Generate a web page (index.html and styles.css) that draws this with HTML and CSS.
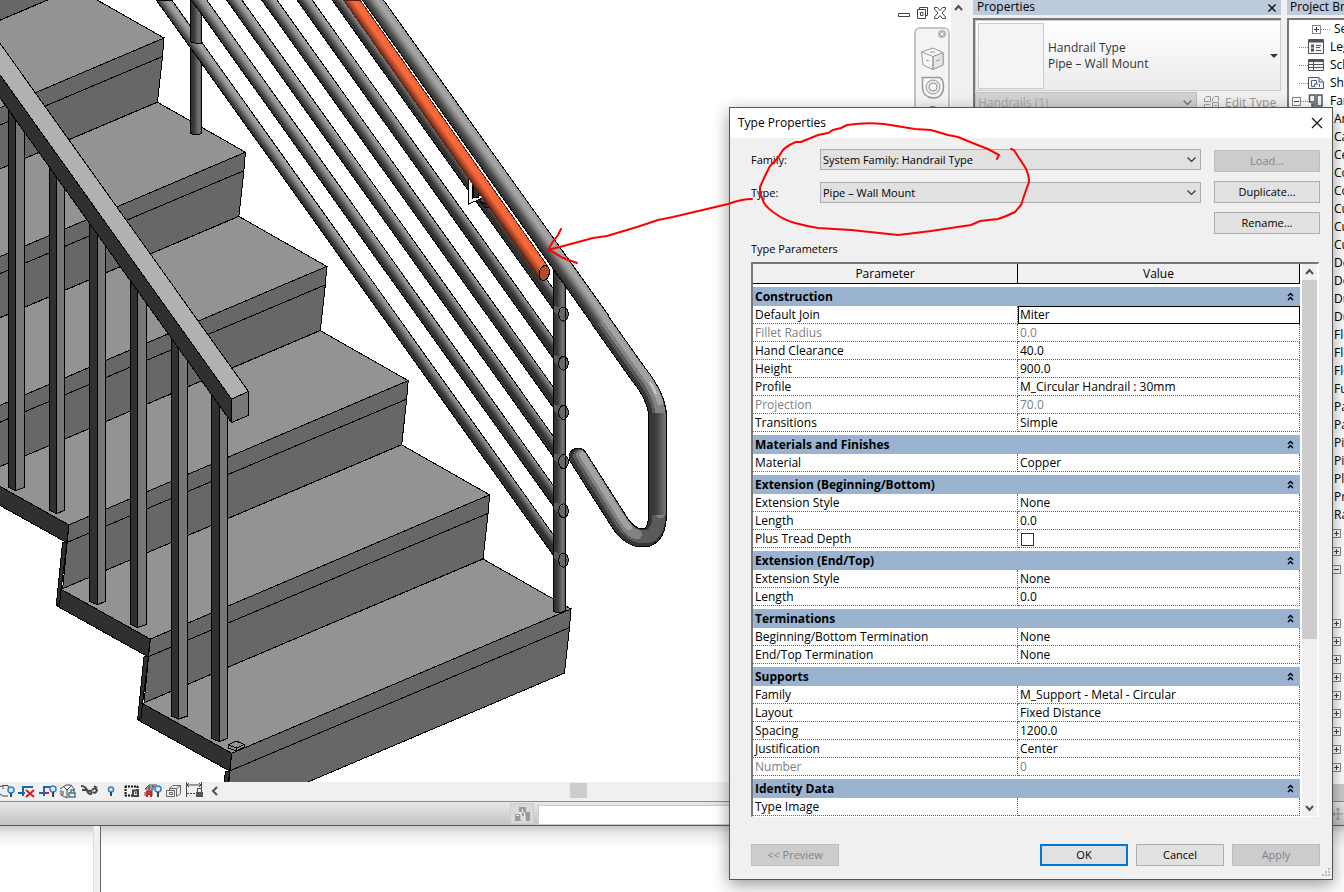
FILE: index.html
```html
<!DOCTYPE html>
<html lang="en">
<head>
  <meta charset="UTF-8">
  <title>Type Properties</title>
  <link rel="stylesheet" href="styles.css">
</head>
<body>

  <div class="app">
    <div class="workspace">

      <!-- 3D view -->
      <main class="view">
        <div class="canvas">
          <svg class="drawing" role="img" aria-label="Stair and railing">
            <defs>
              <linearGradient id="pipeShade" gradientUnits="userSpaceOnUse" x1="158.9" y1="3.7" x2="169.1" y2="-3.7">
                <stop offset="0" stop-color="#303030"/><stop offset=".2" stop-color="#505050"/>
                <stop offset=".5" stop-color="#8c8c8c"/><stop offset=".75" stop-color="#a6a6a6"/><stop offset="1" stop-color="#8a8a8a"/>
              </linearGradient>
              <linearGradient id="railShade" gradientUnits="userSpaceOnUse" x1="366.3" y1="4.8" x2="379.7" y2="-4.8">
                <stop offset="0" stop-color="#333"/><stop offset=".2" stop-color="#4a4a4a"/>
                <stop offset=".5" stop-color="#8c8c8c"/><stop offset=".7" stop-color="#a8a8a8"/><stop offset="1" stop-color="#999"/>
              </linearGradient>
              <linearGradient id="copperShade" gradientUnits="userSpaceOnUse" x1="346.5" y1="3.7" x2="357" y2="-3.7">
                <stop offset="0" stop-color="#6e2c18"/><stop offset=".25" stop-color="#b54b2c"/>
                <stop offset=".55" stop-color="#fb6a3c"/><stop offset="1" stop-color="#f06338"/>
              </linearGradient>
              <linearGradient id="postShade">
                <stop offset="0" stop-color="#303030"/><stop offset=".3" stop-color="#383838"/>
                <stop offset=".75" stop-color="#747474"/><stop offset="1" stop-color="#5c5c5c"/>
              </linearGradient>
              <linearGradient id="dropShade">
                <stop offset="0" stop-color="#333"/><stop offset=".4" stop-color="#3c3c3c"/><stop offset="1" stop-color="#787878"/>
              </linearGradient>
              <g id="step">
                <path class="front" d="M571 609L569.500 627.500L564.500 673L225.500 817L231.700 753Z"/>
                <path class="edge" d="M569.500 627.500L229.500 771"/>
                <path class="side" d="M225.400 771H229.800L224 817L222.500 832L219 834Z"/>
                <path class="tread" d="M483 559L571 609L231.700 753.300L142.500 703.500Z"/>
                <path class="side" d="M142.500 703.500L231.700 753.300L229.500 771L138 720L141 718Z"/>
              </g>
              <path id="pipe" class="pipe" d="M156.200 0H171.700L553.500 535V555.500Z"/>
              <g id="elbow">
                <path class="knuckle" d="M554 552L560 553Q567 552 567 559L563 567L554 558Z"/>
                <ellipse class="cap" cx="563.500" cy="560" rx="4.800" ry="7"/>
                <path class="edge" d="M565.500 553V566"/>
              </g>
            </defs>

            <use href="#step" x="-488.400" y="-685.200"/>
            <use href="#step" x="-407" y="-571"/>
            <use href="#step" x="-325.600" y="-456.800"/>
            <use href="#step" x="-244.200" y="-342.600"/>
            <use href="#step" x="-162.800" y="-228.400"/>
            <use href="#step" x="-81.400" y="-114.200"/>
            <use href="#step"/>

            <g class="balusters">
              <path class="dark" d="M8.500 97H15.500V490.500L8.500 487.500Z"/><path class="light" d="M15.500 97H24.500V487.500L15.500 490.500Z"/>
              <path class="dark" d="M49.500 154H56.500V513.500L49.500 510.500Z"/><path class="light" d="M56.500 154H64.500V510.500L56.500 513.500Z"/>
              <path class="dark" d="M89.500 210H97.500V604.500L89.500 601.500Z"/><path class="light" d="M97.500 210H105.500V601.500L97.500 604.500Z"/>
              <path class="dark" d="M130.500 268H137.500V627.500L130.500 624.500Z"/><path class="light" d="M137.500 268H146.500V624.500L137.500 627.500Z"/>
              <path class="dark" d="M171.500 325H178.500V719L171.500 716Z"/><path class="light" d="M178.500 325H187.500V716L178.500 719Z"/>
              <path class="dark" d="M211.500 381H219.500V741.500L211.500 738.500Z"/><path class="light" d="M219.500 381H227.500V738.500L219.500 741.500Z"/>
            </g>
            <path class="dark" d="M-2 72L231.500 399V422.500L-2 95Z"/>
            <path class="railtop" d="M-2 40.500L248.500 391.500L231.500 399L-2 72Z"/>
            <path class="light" d="M231.500 399L248.500 391.500V415.500L231.500 422.500Z"/>
            <path class="tread" d="M228.500 745L236 741L244.500 744.500V747L236.500 751L228.500 748Z"/>
            <path class="edge" d="M228.500 745L236.500 748L244.500 744.500M236.500 748V751"/>

            <path class="post" d="M190.500 44H201.500V133Q196 137 190.500 133Z"/>
            <use href="#pipe"/>
            <path class="post" d="M190.500 -2H201.500V43L199 44L191 42Z"/>
            <use href="#pipe" y="-49.200"/>
            <use href="#pipe" y="-98.400"/>
            <use href="#pipe" y="-147.600"/>
            <use href="#pipe" y="-196.800"/>
            <use href="#pipe" y="-246"/>

            <path class="post" d="M553.500 262H565.500V610Q559 615 553.500 611Z"/>
            <use href="#elbow"/>
            <use href="#elbow" y="-49.200"/>
            <use href="#elbow" y="-98.400"/>
            <use href="#elbow" y="-147.600"/>
            <use href="#elbow" y="-196.800"/>
            <use href="#elbow" y="-246"/>

            <!-- handrail with its return bend -->
            <g class="bend">
              <path class="b0" d="M600 320L638 373.500Q657.500 398 657.500 416V513Q657.500 538 643 538Q630 538 620 523L578 457"/>
              <path class="b1" d="M600 320L638 373.500Q657.500 398 657.500 416V513Q657.500 538 643 538Q630 538 620 523L578 457"/>
              <path class="b2" d="M601.500 319L639.500 372.500Q659 397 659 416V513Q659 537 644 537Q632 537 621 522L579.500 456"/>
              <path class="b3" d="M603 318L641 371.500Q660 395 660.500 416V513M637 534.500Q630 533 622.500 521L581 455"/>
              <path class="b4" d="M604 317L642 370.500Q656 388 660 402M629 527Q626 525 623.500 520.500L582 454.500"/>
            </g>
            <path class="drop" d="M649 413H666V515H649Z"/>
            <path class="handrail" d="M360 -3.500H381L609 316L594 326.500Z"/>
            <path class="edge" d="M362.500 0L594 326.500M383.500 0L609 316"/>
            <path class="glint" d="M650 382Q654 388 656 394"/>

            <!-- wall bracket -->
            <path class="bracket-line" d="M470.500 178V201L485 195"/>
            <path class="bracket" d="M470.500 178V201L485 195"/>
            <path class="dark" d="M473.500 183V197H478.500V188Z"/>
            <path class="dark" d="M479 201L488 205L492 208L485 207Z"/>

            <path class="copper" d="M343.500 0H360L547.500 266L539.500 279Z"/>
            <ellipse class="copper-end" cx="544.300" cy="273" rx="5" ry="7.500" transform="rotate(12 544.300 273)"/>
          </svg>

          <div class="window-tools">
            <button aria-label="Minimize view"><svg width="14" height="14"><path class="ico" d="M1.500 7.500H12.500V10.500H1.500Z"/></svg></button>
            <button aria-label="Restore view"><svg width="14" height="14"><path class="ico" d="M4.500 3.500V1.500H12.500V9.500H10.500M2.500 3.500H10.500V12.500H2.500ZM5.500 6.500H8V9.500H5.500Z"/></svg></button>
            <button aria-label="Close view"><svg width="14" height="14"><path class="ico" d="M1.500 1.500H4.500L7 4.500L9.500 1.500H12.500V3L9 7L12.500 11V12.500H9.500L7 9.500L4.500 12.500H1.500V11L5 7L1.500 3Z"/></svg></button>
          </div>
          <div class="navbar">
            <svg width="32" height="90" viewBox="1 1 32 90">
              <circle cx="27" cy="6" r="4" fill="#b4b4b4"/><path d="M25.500 4.500L28.500 7.500M28.500 4.500L25.500 7.500" stroke="#fff"/>
              <g fill="#f7f7f7" stroke="#999"><path d="M6.500 24L18 20L28 24.500V37L18 41.500L8 37Z"/><path fill="#e6e6e6" d="M18 28.500L28 24.500V37L18 41.500Z"/><path d="M6.500 24L18 28.500L28 24.500M18 28.500V41.500M11 32L14 33M21 33L25 31.500M15 24H20"/>
              <path d="M7.500 49.500H24Q28.500 50 28.500 59Q28 70 18 70Q8 69 7.500 60Z" stroke-width="1.500"/><circle cx="18" cy="59" r="7" fill="#e6e6e6"/><circle cx="18" cy="59" r="4"/></g>
              <path d="M15 79H20" stroke="#888" stroke-width="2"/>
            </svg>
          </div>
        </div>

        <div class="viewbar">
          <button aria-label="Sun path"><svg width="16" height="18" viewBox="5 0 16 18"><path class="k" d="M4 5L8 3.500H13L14 8M5 12L8 14H13M8 4V7"/><circle class="b" cx="16" cy="8" r="3"/><path class="k2" d="M16 11V15"/></svg></button>
          <button aria-label="Crop view"><svg width="21" height="18"><path class="bb" d="M7 14V5H17M2 11H9"/><path class="r" d="M10 8L18 15M18 8L10 15"/></svg></button>
          <button aria-label="Show crop region"><svg width="21" height="18"><path class="bb" d="M7 14V5H13M2 11H9"/><path class="r" d="M9 11H12"/><circle class="b" cx="16" cy="7" r="3"/><path class="k2" d="M16 10V15"/></svg></button>
          <button aria-label="Lock 3D view"><svg width="21" height="18"><path class="k" d="M2 7L8 3L13 3L17 8M3 8V13L9 16V8L6 5M9 8L13 4M5 9V13"/><path class="t" d="M11 11H17V15H11ZM13 11V8H16V11"/></svg></button>
          <button aria-label="Temporary hide"><svg width="21" height="18"><path class="k2" d="M2 4Q6 4 8 8L3 8M8 9Q9 12 12 12Q14 8 9 9M14 10Q17 12 18 8Q16 5 13 8M15 4L18 6"/></svg></button>
          <button aria-label="Reveal hidden elements"><svg width="21" height="18"><circle class="b" cx="11" cy="7.500" r="2.500"/><path class="k2" d="M11 10V14"/></svg></button>
          <button aria-label="Temporary view properties"><svg width="21" height="18"><path class="d" d="M4 4.500H17M4 13.500H11M4.500 4V14M16.500 4V8"/><path class="k2" d="M12 8.500H17V14H12ZM14 11H15.500"/></svg></button>
          <button aria-label="Analytical model"><svg width="21" height="18"><path class="k" d="M3 7L7 3H15M3 7H10V14M7 3V12M11 3V8M3 10V14M5 5H13"/><path class="r" d="M5 15V9.500H9V15M5 12H9"/><circle class="b" cx="16" cy="7" r="3"/><path class="k2" d="M16 10V15"/></svg></button>
          <button aria-label="Displacement sets"><svg width="21" height="18"><path class="g" d="M6.500 6.500L9.500 3.500H17.500V11.500L13.500 14.500M3.500 8.500H11.500V14.500H3.500ZM6.500 8.500V6.500H13.500V14.500M13.500 6.500L17.500 3.500M6.500 10.500H9.500V12.500H6.500Z"/></svg></button>
          <button aria-label="Reveal constraints"><svg width="21" height="18"><path class="k" d="M2.500 0V15M17.500 0V6M3 3H17M5 1L3 3L5 5M15 1L17 3L15 5"/><path class="k" stroke-dasharray="2 1" d="M3 11.500H11"/><path class="lock" d="M12 10H19V15H12Z"/><path class="k" d="M13.500 10V6.500H17.500V10"/></svg></button>
          <button aria-label="Scroll left"><svg width="20" height="18"><path class="arrow" d="M12 5L8 9L12 13"/></svg></button>
          <div class="hscroll"><span class="hthumb"></span></div>
        </div>
      </main>

      <div class="vscroll"><svg width="15" height="16"><path class="arrow" d="M4 10L7.500 6L11 10"/></svg></div>

      <aside class="properties">
        <header class="panel-head"><span>Properties</span><button aria-label="Close properties"><svg width="10" height="10"><path d="M1.500 1.500L8.500 8.500M8.500 1.500L1.500 8.500" stroke="#111" stroke-width="1.500"/></svg></button></header>
        <div class="panel-body">
          <button class="type-picker">
            <span class="thumb"></span>
            <span class="type-name">Handrail Type<br>Pipe – Wall Mount</span>
            <svg width="10" height="6"><path d="M1 1H9L5 5Z" fill="#333"/></svg>
          </button>
          <div class="filter">
            <select aria-label="Selection filter" disabled><option>Handrails (1)</option></select>
            <button class="edit-type" disabled>
              <svg width="18" height="16"><path d="M1.500 7V3.500L3.500 1.500H7.500V6.500H1.500M9.500 6V3.500L11.500 1.500H15.500V6M1.500 9V14.500H7M3 9.500H7M9.500 7.500H15.500V15.500H9.500ZM11.500 10.500H14M11.500 13.500H14" fill="none" stroke="#999"/></svg>
              Edit Type
            </button>
          </div>
        </div>
      </aside>

      <aside class="browser">
        <header class="panel-head"><span>Project Browser</span></header>
        <ul class="tree">
          <li class="l1"><i class="box plus"></i><i class="dots"></i>Sections</li>
          <li class="l2"><i class="dots"></i><svg width="16" height="16"><path d="M.500 .500H15.500V14.500H.500ZM1 3H15" fill="#f5f5f5" stroke="#4b5460"/><path d="M1 2H15" stroke="#4b5460" stroke-width="2"/><path d="M3 7H6M3 11H6" stroke="#4b5460" stroke-width="3"/><path d="M8 6.500H13M8 8.500H12M8 11.500H13" stroke="#4b5460"/></svg>Legends</li>
          <li class="l2"><i class="dots"></i><svg width="16" height="16"><path d="M.500 2.500H15.500V13.500H.500ZM1 7.500H15M1 10.500H15M5.500 3V13" fill="#f5f5f5" stroke="#4b5460"/><path d="M1 3.500H15" stroke="#4b5460" stroke-width="3"/></svg>Schedules</li>
          <li class="l2"><i class="dots"></i><svg width="16" height="16"><path d="M.500 2.500H11L15.500 7V13.500H.500ZM11 3V7H15" fill="#f5f5f5" stroke="#4b5460"/><path d="M3.500 11.500V5.500H8.500V9M3.500 11.500H6.500V9H10M11.500 9V12" fill="none" stroke="#496582"/></svg>Sheets</li>
          <li class="l2"><i class="box minus"></i><i class="dots"></i><svg width="16" height="16"><path d="M1.500 2H7V9H1.500ZM9 2H14V13H4V11H9Z" fill="#f5f5f5" stroke="#4b5460" stroke-width="1.500"/></svg>Families</li>
          <li class="l3">Annotation Symbols</li>
          <li class="l3">Cable Trays</li>
          <li class="l3">Ceilings</li>
          <li class="l3">Columns</li>
          <li class="l3">Conduits</li>
          <li class="l3">Curtain Panels</li>
          <li class="l3">Curtain Systems</li>
          <li class="l3">Curtain Wall Mullions</li>
          <li class="l3">Detail Items</li>
          <li class="l3">Doors</li>
          <li class="l3">Duct Systems</li>
          <li class="l3">Ducts</li>
          <li class="l3">Flex Ducts</li>
          <li class="l3">Flex Pipes</li>
          <li class="l3">Floors</li>
          <li class="l3">Furniture</li>
          <li class="l3">Parking</li>
          <li class="l3">Pattern</li>
          <li class="l3">Pipes</li>
          <li class="l3">Piping Systems</li>
          <li class="l3">Planting</li>
          <li class="l3">Profiles</li>
          <li class="l3">Railings</li>
          <li class="l4"><i class="box plus"></i></li>
          <li class="l4"><i class="box plus"></i></li>
          <li class="l4"><i class="box minus"></i></li>
          <li class="l4"></li>
          <li class="l4"></li>
          <li class="l4"><i class="box plus"></i></li>
          <li class="l4"><i class="box plus"></i></li>
          <li class="l4"><i class="box plus"></i></li>
          <li class="l4"><i class="box plus"></i></li>
          <li class="l4"><i class="box plus"></i></li>
          <li class="l4"><i class="box plus"></i></li>
          <li class="l4"><i class="box plus"></i></li>
          <li class="l4"><i class="box plus"></i></li>
          <li class="l4"><i class="box plus"></i></li>
        </ul>
        <div class="tree-scroll"></div>
      </aside>
    </div>

    <footer class="statusbar">
      <button class="worksets" aria-label="Worksets"><svg width="18" height="18"><path d="M5 2H12V7H5ZM1 9H7V16H1ZM11 7H16V16H12ZM8 8H10V11H8Z" fill="#9b9b9b"/><path d="M4 8L7 9V15M8.500 4V7M10.500 9V15M2 10.500H5" fill="none" stroke="#f3f3f3"/></svg></button>
      <div class="status-field"></div>
      <svg width="12" height="14"><path d="M6 1V13M1 7H11M4 3L6 1L8 3M4 11L6 13L8 11M3 5L1 7L3 9" fill="none" stroke="#8f8f8f"/></svg>
    </footer>
  </div>

  <div class="lower"><div class="lower-side"></div></div>

  <!-- Type Properties window -->
  <form class="dialog" onsubmit="return false">
    <header class="titlebar">
      <span>Type Properties</span>
      <button type="button" aria-label="Close"><svg width="12" height="12"><path d="M1 1L11 11M11 1L1 11" stroke="#111" stroke-width="1.200"/></svg></button>
    </header>

    <div class="dialog-body">
      <div class="top">
        <div class="fields">
          <label for="family">Family:</label>
          <select id="family"><option>System Family: Handrail Type</option></select>
          <label for="type">Type:</label>
          <select id="type"><option>Pipe – Wall Mount</option></select>
        </div>
        <div class="side-buttons">
          <button type="button" disabled>Load...</button>
          <button type="button">Duplicate...</button>
          <button type="button">Rename...</button>
        </div>
      </div>

      <p class="caption">Type Parameters</p>

      <div class="params">
        <table>
          <thead>
            <tr><th>Parameter</th><th>Value</th></tr>
          </thead>
          <tbody>
            <tr class="group"><th colspan="2"><span>Construction<svg width="7" height="9"><path d="M1 4L3.500 1.500L6 4M1 8L3.500 5.500L6 8"/></svg></span></th></tr>
            <tr><td>Default Join</td><td class="active">Miter</td></tr>
            <tr class="off"><td>Fillet Radius</td><td>0.0</td></tr>
            <tr><td>Hand Clearance</td><td>40.0</td></tr>
            <tr><td>Height</td><td>900.0</td></tr>
            <tr><td>Profile</td><td>M_Circular Handrail : 30mm</td></tr>
            <tr class="off"><td>Projection</td><td>70.0</td></tr>
            <tr><td>Transitions</td><td>Simple</td></tr>
            <tr class="group"><th colspan="2"><span>Materials and Finishes<svg width="7" height="9"><path d="M1 4L3.500 1.500L6 4M1 8L3.500 5.500L6 8"/></svg></span></th></tr>
            <tr><td>Material</td><td>Copper</td></tr>
            <tr class="group"><th colspan="2"><span>Extension (Beginning/Bottom)<svg width="7" height="9"><path d="M1 4L3.500 1.500L6 4M1 8L3.500 5.500L6 8"/></svg></span></th></tr>
            <tr><td>Extension Style</td><td>None</td></tr>
            <tr><td>Length</td><td>0.0</td></tr>
            <tr><td><label for="tread">Plus Tread Depth</label></td><td><input type="checkbox" id="tread"></td></tr>
            <tr class="group"><th colspan="2"><span>Extension (End/Top)<svg width="7" height="9"><path d="M1 4L3.500 1.500L6 4M1 8L3.500 5.500L6 8"/></svg></span></th></tr>
            <tr><td>Extension Style</td><td>None</td></tr>
            <tr><td>Length</td><td>0.0</td></tr>
            <tr class="group"><th colspan="2"><span>Terminations<svg width="7" height="9"><path d="M1 4L3.500 1.500L6 4M1 8L3.500 5.500L6 8"/></svg></span></th></tr>
            <tr><td>Beginning/Bottom Termination</td><td>None</td></tr>
            <tr><td>End/Top Termination</td><td>None</td></tr>
            <tr class="group"><th colspan="2"><span>Supports<svg width="7" height="9"><path d="M1 4L3.500 1.500L6 4M1 8L3.500 5.500L6 8"/></svg></span></th></tr>
            <tr><td>Family</td><td>M_Support - Metal - Circular</td></tr>
            <tr><td>Layout</td><td>Fixed Distance</td></tr>
            <tr><td>Spacing</td><td>1200.0</td></tr>
            <tr><td>Justification</td><td>Center</td></tr>
            <tr class="off"><td>Number</td><td>0</td></tr>
            <tr class="group"><th colspan="2"><span>Identity Data<svg width="7" height="9"><path d="M1 4L3.500 1.500L6 4M1 8L3.500 5.500L6 8"/></svg></span></th></tr>
            <tr><td>Type Image</td><td></td></tr>
          </tbody>
        </table>
        <div class="scrollbar">
          <svg width="15" height="16"><path class="arrow" d="M4 10L7.500 6L11 10"/></svg>
          <span class="track"><span class="grip"></span></span>
          <svg width="15" height="16"><path class="arrow" d="M4 6L7.500 10L11 6"/></svg>
        </div>
      </div>

      <div class="actions">
        <button type="button" class="preview" disabled>&lt;&lt; Preview</button>
        <button type="submit" class="ok">OK</button>
        <button type="button">Cancel</button>
        <button type="button" disabled>Apply</button>
      </div>
    </div>
    <svg class="resize" width="10" height="10"><path d="M7 1H9M4 4H6M7 4H9M1 7H3M4 7H6M7 7H9" stroke="#bbb" stroke-width="2"/></svg>
  </form>

  <!-- red pen marks -->
  <svg class="ink" aria-hidden="true">
    <path d="M997 159L999 155L988 149L980 146L958 137L948 135L931 130L915 129L884 124Q866 122 847 125L841 128L833 130L828 133L818 135L801 142L796 142Q788 145 783 150L777 159L770 166L765 176L760 187V193L764 203Q768 209 776 214Q784 220 795 223Q806 226 818 228L851 230L898 235L915 233L931 231L971 225L980 221L998 219Q1007 216 1015 212L1021 205L1025 193L1029 182Q1029 174 1025 167L1019 158L1014 150L1011 149"/>
    <path d="M752 199Q742 199 728 204L690 213L673 217L658 220L637 227L607 236L593 238L567 245L548 250"/>
    <path d="M561 229L558 235L552 243L548 250L553 252L563 258L577 263"/>
  </svg>

</body>
</html>
```
FILE: styles.css
```css
* {
  box-sizing: border-box;
}
body {
  margin: 0;
  min-height: 100vh;
  display: flex;
  flex-direction: column;
  overflow: hidden;
  background: #fff;
  font: 12px/16px "Open Sans", "Noto Sans", sans-serif;
  color: #000;
}
button, select, input {
  font: inherit;
  color: inherit;
}
button {
  padding: 0;
  border: 0;
  background: none;
}
svg {
  display: block;
  flex: none;
}
.arrow {
  fill: none;
  stroke: #505050;
  stroke-width: 2;
}

/* application frame */
.app {
  flex: 1;
  min-height: 0;
  display: flex;
  flex-direction: column;
  border-bottom: 1px solid #5a5a5a;
}
.workspace {
  flex: 1;
  min-height: 0;
  display: flex;
  background: #f0f0f0;
}
.view {
  flex: 1;
  min-width: 0;
  display: flex;
  flex-direction: column;
}
.canvas {
  position: relative;
  flex: 1;
  min-height: 0;
  background: #fff;
}
.drawing {
  position: absolute;
  inset: 0;
  width: 100%;
  height: 100%;
  stroke: #000;
  stroke-width: 1;
  fill: none;
  shape-rendering: crispEdges;
}
.front { fill: #676767; }
.side, .dark { fill: #303030; }
.tread { fill: #939393; }
.light { fill: #777; }
.railtop { fill: #b1b1b1; }
.pipe { fill: url(#pipeShade); }
.post { fill: url(#postShade); }
.cap { fill: #666; }
.knuckle { fill: #5c5c5c; stroke: none; }
.handrail { fill: url(#railShade); stroke: none; }
.drop { fill: url(#dropShade); stroke: none; }
.copper { fill: url(#copperShade); stroke: #5a2211; }
.copper-end { fill: #b54b2b; }
.bend { stroke-linecap: round; }
.b0 { stroke-width: 19; }
.b1 { stroke: #363636; stroke-width: 17; }
.b2 { stroke: #5a5a5a; stroke-width: 13; }
.b3 { stroke: #828282; stroke-width: 10; }
.b4 { stroke: #a2a2a2; stroke-width: 6; }
.glint { stroke: #ccc; stroke-width: 2; }
.bracket-line { stroke-width: 5; }
.bracket { stroke: #eee; stroke-width: 3; }

.window-tools {
  position: absolute;
  top: 6px;
  right: 4px;
  display: flex;
  gap: 4px;
}
.ico {
  fill: #fff;
  stroke: #444;
}
.navbar {
  position: absolute;
  top: 27px;
  right: 1px;
  height: 90px;
  border: 2px solid #c4c4c4;
  border-radius: 6px;
  background: #f4f4f4;
}
.viewbar {
  display: flex;
  height: 19px;
  padding-bottom: 2px;
  background: #f0f0f0;
}
.viewbar svg {
  fill: none;
}
.k { stroke: #41464d; }
.k2 { stroke: #41464d; stroke-width: 2; }
.g { stroke: #666; }
.b { stroke: #2f7fd0; stroke-width: 1.5; fill: #d9efff; }
.bb { stroke: #1d66ad; stroke-width: 2; }
.r { stroke: #d02020; stroke-width: 2; }
.t { stroke: #427b80; stroke-width: 1.5; }
.d { stroke: #111; stroke-width: 2; stroke-dasharray: 2 1; }
.lock { fill: #555; }
.hscroll {
  flex: 1;
  padding-left: 345px;
}
.hthumb {
  display: block;
  width: 17px;
  height: 15px;
  margin-top: 1px;
  background: #cdcdcd;
}
.vscroll {
  width: 17px;
  margin-right: 5px;
  background: #f0f0f0;
}

/* docked panels */
.panel-head {
  display: flex;
  justify-content: space-between;
  height: 15px;
  padding: 0 4px;
  line-height: 14px;
  background: #bccadb;
  white-space: nowrap;
}
.browser .panel-head {
  padding: 0 3px;
}
.properties {
  width: 308px;
  margin-right: 6px;
}
.panel-body {
  margin-top: 3px;
  border: 1px solid #777;
  border-width: 2px 0 0 2px;
}
.type-picker {
  display: flex;
  align-items: center;
  width: 100%;
  height: 71px;
  padding: 0 5px 0 2px;
  border: 1px solid #ccc;
  background: linear-gradient(#fff, #ebebeb);
  text-align: left;
  color: #333;
}
.type-picker svg {
  margin: 0 -4px 0 auto;
}
.thumb {
  width: 66px;
  height: 66px;
  margin-right: 4px;
  border: 1px solid #ccc;
  background: #f4f4f4;
}
.filter {
  display: flex;
  gap: 6px;
  margin-top: 1px;
  color: #888;
}
.filter select {
  width: 222px;
  height: 22px;
  background-color: #c6c6c6;
}
.edit-type {
  display: flex;
  align-items: center;
  gap: 4px;
  color: #999;
}
.browser {
  width: 57px;
  display: flex;
  flex-direction: column;
  overflow: hidden;
}
.tree {
  flex: 1;
  min-height: 0;
  margin: 3px 0 0;
  padding: 0;
  list-style: none;
  border: 1px solid #777;
  border-width: 2px 0 0 2px;
  background: #fff;
  overflow: hidden;
}
.tree li {
  display: flex;
  align-items: center;
  height: 18px;
  line-height: 14px;
  white-space: nowrap;
}
.l1 { padding-left: 23px; }
.l2 { padding-left: 3px; }
.l2 .dots:first-child { margin-left: 7px; }
.l2 svg { margin-right: 6px; }
.l3 { padding-left: 45px; }
.l4 { padding-left: 43px; }
.dots {
  flex: none;
  width: 9px;
  border-top: 1px dotted #888;
}
.l1 .dots {
  margin-right: 4px;
}
.box {
  flex: none;
  width: 9px;
  height: 9px;
  border: 1px solid #888;
  background: linear-gradient(#25477f, #25477f) center / 5px 1px no-repeat;
}
.minus + .dots {
  width: 7px;
}
.plus {
  background: linear-gradient(#25477f, #25477f) center / 5px 1px no-repeat, linear-gradient(#25477f, #25477f) center / 1px 5px no-repeat;
}
.tree-scroll {
  height: 17px;
  background: #cdcdcd;
}

.statusbar {
  display: flex;
  align-items: center;
  height: 24px;
  border-top: 1px solid #8a8a8a;
  background: linear-gradient(#e8e8e8, #c3c3c3);
}
.worksets {
  width: 24px;
  height: 21px;
  margin-left: 510px;
  padding-left: 3px;
  border: 1px solid #ccc;
  background: #d9d9d9;
}
.status-field {
  flex: 1;
  height: 20px;
  margin: 3px 6px 0 4px;
  border: 1px solid #ccc;
  background: #fff;
}
.lower {
  height: 66px;
  background: linear-gradient(#c9c9c9, #ececec 8px, #fff 22px);
}
.lower-side {
  width: 101px;
  height: 100%;
  border-right: 1px solid #666;
  background: linear-gradient(90deg, transparent 93px, #ddd 93px, #ddd 94px, #f0f0f0 94px);
}

/* dialog window */
.dialog {
  position: absolute;
  left: 729px;
  top: 107px;
  width: 604px;
  border: 1px solid #555;
  background: #f0f0f0;
  box-shadow: 0 5px 16px rgba(0, 0, 0, 0.4);
}
.titlebar {
  display: flex;
  align-items: center;
  justify-content: space-between;
  height: 30px;
  padding: 0 9px 0 8px;
  background: #fff;
}
.dialog-body {
  padding: 11px 12px 13px 21px;
}
.top {
  display: flex;
  gap: 13px;
}
.fields {
  flex: 1;
  display: grid;
  grid-template-columns: 69px 1fr;
  grid-auto-rows: 21px;
  gap: 12px 0;
  align-items: center;
}
select {
  appearance: none;
  height: 21px;
  padding: 0 2px;
  border: 1px solid #adadad;
  border-radius: 0;
  background: #e1e1e1 url("data:image/svg+xml,%3Csvg xmlns='http://www.w3.org/2000/svg' width='9' height='6'%3E%3Cpath d='M.5 .5L4.500 4.500L8.500 .5' fill='none' stroke='%23333' stroke-width='1.200'/%3E%3C/svg%3E") right 4px center no-repeat;
}
.fields select, .fields label, .dialog button, .caption {
  font-size: 11px;
}
.side-buttons {
  display: flex;
  flex-direction: column;
  gap: 9px;
  width: 106px;
  margin-top: 1px;
}
.side-buttons button, .actions button {
  height: 22px;
  border: 1px solid #adadad;
  background: #e1e1e1;
}
.side-buttons button:disabled, .actions button:disabled {
  border-color: #bfbfbf;
  background: #ccc;
  color: #838383;
}
.caption {
  margin: 7px 0 5px;
}
.params {
  display: flex;
  margin-right: 1px;
  border: 1px solid #fff;
  border-top: 2px solid #777;
  border-left: 2px solid #777;
  background: #fff;
}
.params table {
  flex: 1;
  border-spacing: 0;
  table-layout: fixed;
}
.params thead th {
  height: 20px;
  padding: 0;
  font-weight: normal;
  line-height: 18px;
  background: #f0f0f0;
  border-right: 1px solid #000;
  border-bottom: 1px solid #000;
}
.params thead th:first-child {
  width: 265px;
}
.params td {
  height: 18px;
  padding: 0 2px;
  line-height: 17px;
  border-bottom: 1px dotted #666;
  border-right: 1px dotted #666;
}
.params td.active {
  outline: 1px solid #000;
  outline-offset: -1px;
}
.group th {
  padding: 3px 0 0;
  text-align: left;
}
.group span {
  display: flex;
  align-items: center;
  justify-content: space-between;
  height: 19px;
  padding: 0 6px 0 2px;
  background: #99b3d1;
}
.group svg {
  fill: none;
  stroke: #000;
  stroke-width: 1.5;
}
.off {
  color: #808080;
}
.params input {
  appearance: none;
  display: block;
  width: 13px;
  height: 13px;
  margin: 2px 0 0 1px;
  border: 1px solid #333;
  background: #fff;
}
.scrollbar {
  display: flex;
  flex-direction: column;
  width: 15px;
  margin: 0 1px 0 2px;
  background: #f0f0f0;
}
.track {
  flex: 1;
}
.grip {
  display: block;
  height: 69%;
  background: #cdcdcd;
}
.actions {
  display: flex;
  gap: 8px;
  margin-top: 27px;
}
.actions button {
  width: 88px;
}
.actions .preview {
  margin-right: auto;
}
.actions .ok {
  border: 2px solid #0078d7;
}
.resize {
  position: absolute;
  right: 1px;
  bottom: 1px;
}

.ink {
  position: absolute;
  left: 0;
  top: 0;
  width: 100%;
  height: 100%;
  pointer-events: none;
  fill: none;
  stroke: #f00;
  stroke-width: 2;
  stroke-linecap: round;
}
```
